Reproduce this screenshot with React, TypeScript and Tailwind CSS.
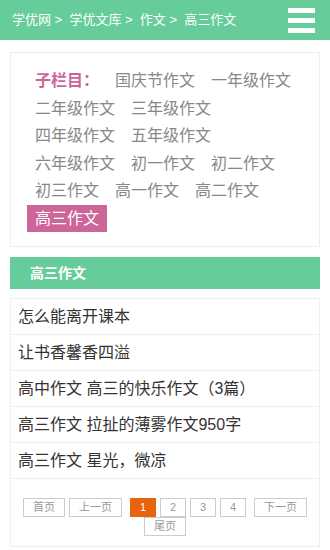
const subColumns = [
  '国庆节作文',
  '一年级作文',
  '二年级作文',
  '三年级作文',
  '四年级作文',
  '五年级作文',
  '六年级作文',
  '初一作文',
  '初二作文',
  '初三作文',
  '高一作文',
  '高二作文',
  '高三作文',
];

const articles = [
  '怎么能离开课本',
  '让书香馨香四溢',
  '高中作文 高三的快乐作文（3篇）',
  '高三作文 拉扯的薄雾作文950字',
  '高三作文 星光，微凉',
];

const font = { fontFamily: '"Liberation Sans", "Noto Sans CJK SC", sans-serif' };

export default function App() {
  return (
    <div className="w-[330px] min-h-[550px] bg-white" style={font}>
      <header className="h-[40px] bg-[#66cc99] flex items-center justify-between pl-[12px] pr-[15px]">
        <div className="text-[13px] leading-[40px] text-white whitespace-nowrap">
          学优网 &gt;&nbsp; 学优文库 &gt;&nbsp; 作文 &gt;&nbsp; 高三作文
        </div>
        <button className="flex flex-col gap-[5px] w-[27px]" aria-label="菜单">
          <span className="block h-[5px] w-full bg-white" />
          <span className="block h-[5px] w-full bg-white" />
          <span className="block h-[5px] w-full bg-white" />
        </button>
      </header>

      <div className="mx-[10px] mt-[12px] border border-[#eeeeee] px-[16px] pt-[14px] pb-[14px]">
        <div className="flex flex-wrap text-[16px] leading-[27.5px]">
          <span className="px-[8px] text-[#cc6699] font-bold">子栏目：</span>
          {subColumns.map((name) =>
            name === '高三作文' ? (
              <span key={name} className="px-[8px] bg-[#cc6699] text-white">
                {name}
              </span>
            ) : (
              <a key={name} className="px-[8px] text-[#888888]">
                {name}
              </a>
            )
          )}
        </div>
      </div>

      <div className="mx-[10px] mt-[10px] h-[32px] bg-[#66cc99] px-[20px] text-[14px] font-bold leading-[32px] text-white">
        高三作文
      </div>

      <div className="mx-[10px] mt-[9px] border border-[#eeeeee]">
        <ul>
          {articles.map((title) => (
            <li
              key={title}
              className="h-[36px] border-b border-[#eeeeee] px-[7px] text-[16px] leading-[36px] text-[#333333] whitespace-nowrap"
            >
              {title}
            </li>
          ))}
        </ul>
        <div className="flex flex-wrap justify-center gap-x-[4px] pt-[19px] pb-[10px] text-[11px] leading-[17px] text-[#999999]">
          <a className="w-[42px] h-[19px] border border-[#cccccc] text-center">首页</a>
          <a className="w-[53px] h-[19px] border border-[#cccccc] text-center">上一页</a>
          <span className="ml-[4px] w-[26px] h-[19px] border border-[#e8640c] bg-[#e8640c] text-white text-center">1</span>
          <a className="w-[26px] h-[19px] border border-[#cccccc] text-center">2</a>
          <a className="w-[26px] h-[19px] border border-[#cccccc] text-center">3</a>
          <a className="w-[26px] h-[19px] border border-[#cccccc] text-center">4</a>
          <a className="ml-[4px] w-[53px] h-[19px] border border-[#cccccc] text-center">下一页</a>
          <a className="w-[42px] h-[19px] border border-[#cccccc] text-center">尾页</a>
        </div>
      </div>
    </div>
  );
}
